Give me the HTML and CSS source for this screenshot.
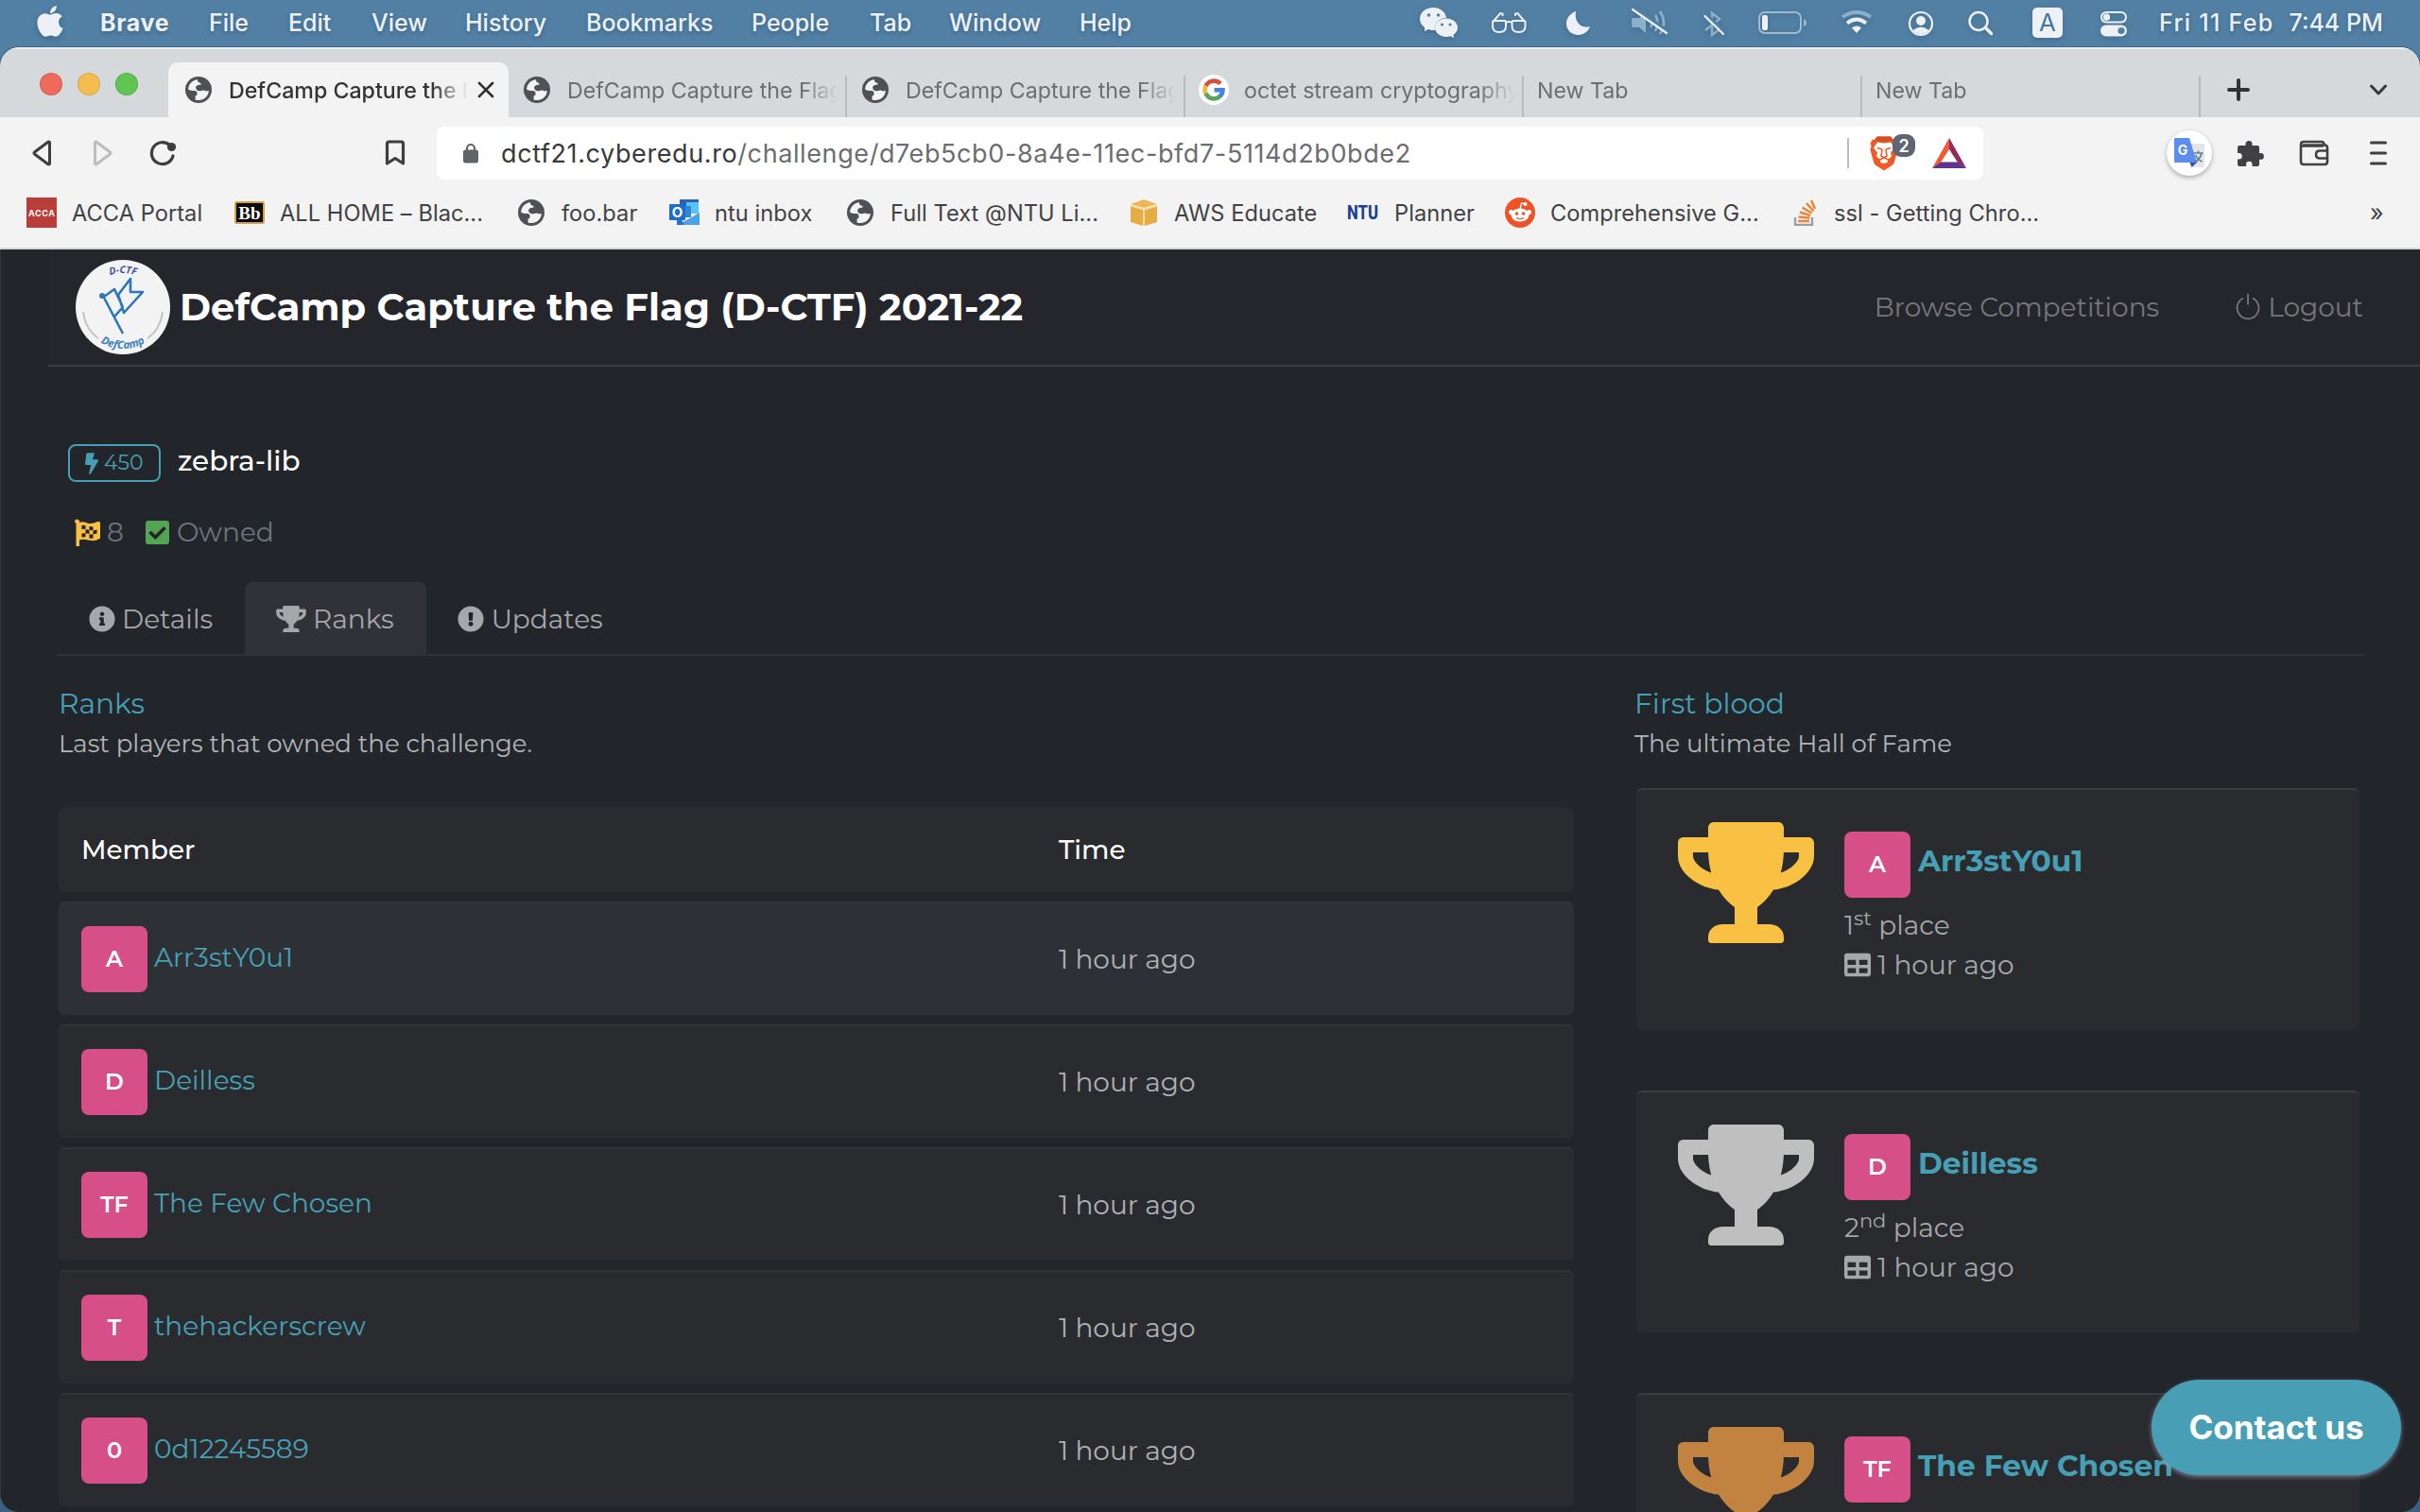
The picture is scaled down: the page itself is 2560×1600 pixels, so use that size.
FILE: index.html
```html
<!DOCTYPE html>
<html lang="en">
<head>
<meta charset="utf-8">
<title>DefCamp Capture the Flag (D-CTF) 2021-22</title>
<link rel="stylesheet" href="styles.css">
</head>
<body>
<svg class="defs" width="0" height="0" aria-hidden="true">
  <symbol id="globe" viewBox="0 0 28 28">
    <circle cx="14" cy="14" r="14" fill="#505157"/>
    <path fill="#f3f3f3" class="land" d="M13 3.2C7.500 3.600 3.300 8.200 3.100 13.600c1.800 1.200 4.300 1.600 6.700 1.500 1.700 0 2.700.9 2.700 2.500v1.500c0 .8-.8 1.300-1.900 1.400v4.100c4.600 1.400 9.300-.1 12-3.600 1.300-1.700 2.100-3.800 2.200-6-.9.300-1.700.3-2.600.3-1.300 0-1.800-.8-3.100-.8-1.200 0-2.500.9-4.100.8-2.300-.1-3.900-1.900-3.900-3.600 0-1.500 1.300-2.600 2.800-2.800 1-.1 2.100.1 2.600-.6.4-.6-.2-1.500-1.300-1.800-1.200-.3-2.400-1.600-2.200-3.300z"/>
    <path fill="#505157" d="M14.500 2.500c-.2 2.400 1 3.500 2.600 4.300 0 2.400 1.200 4.300 3.900 4.300 1.300 0 2.600-.3 3.700-.8C23.500 6 19.600 2.700 14.500 2.500z"/>
  </symbol>
  <symbol id="trophy" viewBox="0 0 576 512">
    <path fill="currentColor" d="M552 64H448V24c0-13.3-10.7-24-24-24H152c-13.300 0-24 10.700-24 24v40H24C10.700 64 0 74.700 0 88v56c0 35.700 22.500 72.400 61.900 100.700 31.500 22.700 69.800 37.100 110 41.700C203.300 338.500 240 360 240 360v72h-48c-35.300 0-64 20.700-64 56v12c0 6.600 5.400 12 12 12h296c6.600 0 12-5.400 12-12v-12c0-35.300-28.700-56-64-56h-48v-72s36.700-21.500 68.100-73.600c40.300-4.600 78.600-19 110-41.700 39.300-28.300 61.900-65 61.900-100.700V88c0-13.300-10.700-24-24-24zM99.300 192.800C74.900 175.200 64 155.600 64 144v-16h64.200c1 32.600 5.800 61.200 12.800 86.200-15.100-5.200-29.200-12.400-41.700-21.400zM512 144c0 16.100-17.700 36.100-35.300 48.800-12.500 9-26.700 16.200-41.800 21.400 7-25 11.800-53.600 12.800-86.200H512v16z"/>
  </symbol>
  <symbol id="table" viewBox="0 0 512 512">
    <path fill="currentColor" d="M464 32H48C21.490 32 0 53.490 0 80v352c0 26.510 21.490 48 48 48h416c26.510 0 48-21.490 48-48V80c0-26.510-21.490-48-48-48zM224 416H64v-96h160v96zm0-160H64v-96h160v96zm224 160H288v-96h160v96zm0-160H288v-96h160v96z"/>
  </symbol>
</svg>

<div class="menubar">
  <svg class="apple" viewBox="0 0 384 512"><path d="M318.700 268.700c-.2-36.700 16.400-64.400 50-84.800-18.800-26.900-47.200-41.700-84.700-44.600-35.500-2.800-74.300 20.700-88.500 20.700-15 0-49.400-19.700-76.400-19.700C63.300 141.200 4 184.800 4 273.500q0 39.300 14.400 81.200c12.800 36.700 59 126.700 107.200 125.200 25.200-.6 43-17.900 75.800-17.900 31.800 0 48.300 17.900 76.400 17.900 48.600-.7 90.400-82.500 102.600-119.300-65.200-30.700-61.700-90-61.700-91.900zm-56.600-164.200c27.300-32.400 24.800-61.900 24-72.500-24.100 1.400-52 16.400-67.900 34.900-17.500 19.800-27.800 44.300-25.600 71.900 26.100 2 49.900-11.400 69.500-34.300z"/></svg>
  <nav class="menus">
    <b>Brave</b><span>File</span><span>Edit</span><span>View</span><span>History</span><span>Bookmarks</span><span>People</span><span>Tab</span><span>Window</span><span>Help</span>
  </nav>
  <div class="tray">
    <svg width="45" height="48"><g fill="#edf1f5"><path d="M16 8C8 8 2 13 2 20c0 4 2 7 5 9v4l4-2c2 1 5 1 7 1C17 24 23 19 30 19 29 12 23 8 16 8z"/><path d="M30 19.500c-6.500 0-12 4.300-12 9.800S23.500 39 30 39c1.500 0 3-.2 4.500-.7l3.500 2-.5-3.600c2.700-1.700 4.500-4.300 4.500-7.400 0-5.500-5.500-9.800-12-9.800z"/></g><g fill="#5180a4"><circle cx="11.500" cy="16" r="1.800"/><circle cx="21.500" cy="16" r="1.800"/><circle cx="25.500" cy="26" r="1.600"/><circle cx="34" cy="26" r="1.600"/></g></svg>
    <svg width="46" height="48" fill="none" stroke="#edf1f5" stroke-width="2"><path d="M9 23.500q0-1.500 1.500-1.500h11q1.500 0 1.500 1.500v4q0 6.500-7 6.500t-7-6.500zM29.500 23.500q0-1.500 1.500-1.500h11q1.500 0 1.500 1.500v4q0 6.500-7 6.500t-7-6.500zM23 23.500q3.200-1 6.500 0M9 23.500l8-9.500 2.500.5v2.500M43.500 23.500l-8-9.500-2.500.5v2.500"/></svg>
    <svg width="45" height="48"><path fill="#edf1f5" d="M17 12C10 14.500 7 20 7 25c0 7 5.500 12 12.500 12 6 0 10.500-3.500 12.500-9-9 2.500-17-4-15-16z"/></svg>
    <svg width="50" height="48" fill="none"><path fill="#8db0c9" d="M8 19h6l7-6v22l-7-6H8q-2 0-2-2v-6q0-2 2-2z"/><path stroke="#8db0c9" stroke-width="2.500" d="M26 20q3 4 0 9M31 16q5 8 0 17M36 12q8 12 0 24"/><path stroke="#5180a4" stroke-width="5" d="M8 8l35 25"/><path stroke="#edf1f5" stroke-width="2.200" stroke-linecap="round" d="M7 10l36 25"/></svg>
    <svg width="40" height="48" fill="none"><path stroke="#8db0c9" stroke-width="2.500" d="M9 32l15-12-8-6v23l8-6L10 19"/><path stroke="#5180a4" stroke-width="5" d="M9 15l20 20"/><path stroke="#edf1f5" stroke-width="2.200" stroke-linecap="round" d="M8.500 17l19.500 19"/></svg>
    <svg width="60" height="48" fill="none"><rect x="11" y="13" width="44" height="22" rx="6" stroke="#9dbad0" stroke-width="2"/><rect x="14" y="16" width="6" height="16" rx="2" fill="#edf1f5"/><path fill="#9dbad0" d="M58 20q3 1 3 4t-3 4z"/></svg>
    <svg width="40" height="48" fill="none"><path stroke="#8db0c9" stroke-width="3.800" d="M4 18q15-10 30 0"/><path stroke="#edf1f5" stroke-width="3.800" d="M9 24.500q10-8 20 0"/><path fill="#edf1f5" d="M19 35l-5-5.500q5-4 10 0z"/></svg>
    <svg width="40" height="48"><circle cx="17" cy="25" r="12" fill="none" stroke="#edf1f5" stroke-width="2.200"/><circle cx="17" cy="22" r="5" fill="#edf1f5"/><path fill="#edf1f5" d="M8.500 32q8.500-7 17 0-3 4-8.500 4t-8.500-4z"/></svg>
    <svg width="45" height="48" fill="none" stroke="#edf1f5"><circle cx="18" cy="22.500" r="9.500" stroke-width="2.500"/><path stroke-width="3.400" stroke-linecap="round" d="M25.500 29.500l6 6"/></svg>
    <span class="input-source">A</span>
    <svg width="40" height="48"><rect x="8" y="13" width="26" height="10.500" rx="5.200" fill="none" stroke="#edf1f5" stroke-width="2"/><circle cx="13.500" cy="18.200" r="3.600" fill="#edf1f5"/><rect x="7" y="26.500" width="28" height="12" rx="6" fill="#edf1f5"/><circle cx="29" cy="32.500" r="3.600" fill="#5180a4"/></svg>
  </div>
  <div class="clock"><span class="date">Fri 11 Feb</span><span>7:44 PM</span></div>
</div>

<div class="window">
  <div class="tabstrip">
    <div class="lights"><i class="close"></i><i class="min"></i><i class="max"></i></div>
    <div class="tab active"><svg class="fav"><use href="#globe"/></svg><span class="label">DefCamp Capture the Flag</span><svg class="x" width="18" height="18"><path d="M2 2l14 14M16 2L2 16" stroke="#2f2f31" stroke-width="2.600" stroke-linecap="round"/></svg></div>
    <div class="tab"><svg class="fav"><use href="#globe"/></svg><span class="label">DefCamp Capture the Flag</span></div>
    <div class="tab"><svg class="fav"><use href="#globe"/></svg><span class="label">DefCamp Capture the Flag</span></div>
    <div class="tab google"><svg width="32" height="32"><circle cx="16" cy="16" r="16" fill="#fff"/><g fill="none" stroke-width="4.600"><path stroke="#d94f3d" d="M7.600 12A9.500 9.500 0 0 1 23 9.500"/><path stroke="#efb73e" d="M7.700 20.500a9.500 9.500 0 0 1 0-9"/><path stroke="#56a55a" d="M22.500 23A9.500 9.500 0 0 1 7.600 20"/><path stroke="#4a80ee" d="M16.500 16.200h9a9.500 9.500 0 0 1-3.200 6.900"/></g></svg><span class="label">octet stream cryptography</span></div>
    <div class="tab blank"><span class="label">New Tab</span></div>
    <div class="tab blank"><span class="label">New Tab</span></div>
    <div class="strip-end">
      <svg width="24" height="24"><path d="M12 2v20M2 12h20" stroke="#333335" stroke-width="4" stroke-linecap="round"/></svg>
      <svg width="20" height="14" fill="none"><path d="M2.500 3l7.500 8 7.500-8" stroke="#3a3a3c" stroke-width="3" stroke-linecap="round" stroke-linejoin="round"/></svg>
    </div>
  </div>

  <div class="toolbar">
    <div class="nav">
      <svg width="22" height="30" fill="none" stroke="#3e3e40" stroke-width="3" stroke-linejoin="round"><path d="M18.500 3.500v23q-1 1-2 0L2.500 16q-1-1 0-2L16.500 3.500q1-1 2 0z"/></svg>
      <svg width="22" height="30" fill="none" stroke="#bdbdbd" stroke-width="3" stroke-linejoin="round"><path d="M3.500 3.500v23q1 1 2 0L19.500 16q1-1 0-2L5.500 3.500q-1-1-2 0z"/></svg>
      <svg width="30" height="30" fill="none"><path d="M21.500 6.500A11.500 11.500 0 1 0 25 18" stroke="#3e3e40" stroke-width="3.200" stroke-linecap="round"/><circle cx="23.500" cy="8.500" r="4.600" fill="#3e3e40"/></svg>
      <svg width="22" height="30" fill="none" stroke="#3e3e40" stroke-width="3.200" stroke-linejoin="round"><path d="M2.500 26V5q0-2 2-2h13q2 0 2 2v21L11 20.500z"/></svg>
    </div>
    <div class="urlbar">
      <svg width="18" height="24"><path d="M5 10V7a4 4 0 0 1 8 0v3" fill="none" stroke="#606368" stroke-width="2.200"/><rect x="1" y="8.500" width="16" height="14" rx="2.500" fill="#606368"/></svg>
      <span class="url">dctf21.cyberedu.ro<span>/challenge/d7eb5cb0-8a4e-11ec-bfd7-5114d2b0bde2</span></span>
      <i class="sep"></i>
      <svg class="brave" width="50" height="40"><path fill="#ef5b25" d="M8 2.500h14l3 3.500 3-.5 1.500 4-1 3 1 4-3.500 13q-.5 2-2.500 3.500L15 38.500 6.500 33Q4.500 31.500 4 29.500L.5 16.500l1-4-1-3L3 5.500l2 .5z"/><path fill="#d14f22" d="M8 2.500h14l3 3.500-3 1.500H8L5 6z"/><path fill="#fff" d="M8 8.500l7 1 7-1 4 6-4 5 1 4-3.500 3 -1 3.500L15 31l-3.500-1-1-3.500L7 23.500l1-4-4-5z"/><path fill="none" stroke="#ef5b25" stroke-width="1.600" d="M8 14.500l5 1.500M22 14.500L17 16M13 16l-1 7 3 2 3-2-1-7M10 27l5-2 5 2"/><rect x="24" y="0" width="24" height="24" rx="9" fill="#606473"/><text x="36" y="18.500" text-anchor="middle" class="count">2</text></svg>
      <svg width="36" height="32"><path fill="#ee5a3a" d="M18 0L0 32l9-6 9-14z"/><path fill="#922a5e" d="M18 0l18 32-9-6-9-14z"/><path fill="#5f348c" d="M0 32h36l-9-6.500H9z"/></svg>
    </div>
    <div class="ext">
      <span class="translate"><svg width="34" height="34"><path fill="#e3e5e8" d="M14 7h18q1 0 1 1v24H20z"/><path fill="#3450b0" d="M17 26h9l-6.500 6z"/><path fill="#5b8def" d="M2 1h15l8 26H2q-1 0-1-1V2q0-1 1-1z"/><text x="10" y="19" text-anchor="middle" class="g">G</text><path fill="none" stroke="#62808f" stroke-width="1.700" d="M21.500 17h10M26.500 14.500V17M30 17q-1.500 6-7 9.500M23.500 19q2 5 7 7"/></svg></span>
      <svg width="30" height="30"><path fill="#414143" d="M3 7h6.500V5.500a3.500 3.500 0 0 1 7 0V7H22q2 0 2 2v6h1.500a3.300 3.300 0 0 1 0 6.800H24V27q0 2-2 2h-5.500v-2a3.200 3.200 0 0 0-6.400 0v2H3q-2 0-2-2v-5.500h1.500a3.200 3.200 0 0 0 0-6.500H1V9q0-2 2-2z"/></svg>
      <svg width="34" height="28" fill="none" stroke="#414143" stroke-width="2.600" stroke-linejoin="round"><path d="M4 5.500h23q3 0 3 3V23q0 3-3 3H5q-3 0-3-3V5q0-3 3-3h19q2 0 3 3.500M31 11.500h-9q-4 0-4 4t4 4h9M2 6.500h24"/></svg>
      <svg width="18" height="26" stroke="#3e3e40" stroke-width="3" stroke-linecap="round"><path d="M1.500 2h15M1.500 13h15M1.500 24h15"/></svg>
    </div>
  </div>

  <div class="bookmarks">
    <a><svg width="32" height="32"><rect width="32" height="32" fill="#b93d3b"/><text x="16" y="20" text-anchor="middle" class="acca" textLength="28">ACCA</text></svg>ACCA Portal</a>
    <a><svg width="32" height="32"><rect x="1" y="5" width="30" height="22" rx="1.500" fill="#0b0b0b" stroke="#cfa24a" stroke-width="2"/><text x="16" y="22.500" text-anchor="middle" class="bb">Bb</text></svg>ALL HOME – Blac...</a>
    <a><svg width="32" height="28"><use href="#globe" x="2" width="28" height="28"/></svg>foo.bar</a>
    <a><svg width="32" height="30"><path fill="#2a62b4" d="M11 1h20v14H11z"/><path fill="#5cc2f5" d="M18 4h13v12H18z"/><path fill="#2f87d8" d="M11 8h12v12H11z"/><path fill="#4aa3e4" d="M8 28h24V15L20 22z"/><path fill="#2c6fc4" d="M8 14v14h8z"/><rect y="6" width="17" height="17" rx="1" fill="#1f6ccb"/><text x="8.500" y="20" text-anchor="middle" class="o">O</text></svg>ntu inbox</a>
    <a><svg width="32" height="28"><use href="#globe" x="2" width="28" height="28"/></svg>Full Text @NTU Li...</a>
    <a><svg width="32" height="28"><path fill="#e5ae45" d="M2 6.500L15 10v18L2 24zM30 6.500L17 10v18l13-4z"/><path fill="#ecb856" d="M2 5L16 0l14 5-14 4z"/><path stroke="#f5dda8" stroke-width="2" d="M2 6.500l14 4 14-4M16 10v18" fill="none"/></svg>AWS Educate</a>
    <a><svg width="34" height="22"><text x="0" y="18" class="ntu" textLength="33" lengthAdjust="spacingAndGlyphs">NTU</text></svg>Planner</a>
    <a><svg width="32" height="32"><circle cx="16" cy="16" r="16" fill="#ee5328"/><g fill="#fff"><ellipse cx="16" cy="18.500" rx="9.500" ry="7"/><circle cx="6.500" cy="15.500" r="2.500"/><circle cx="25.500" cy="15.500" r="2.500"/><circle cx="21.500" cy="7" r="2"/></g><path d="M16 12l1.500-6 4 1" fill="none" stroke="#fff" stroke-width="1.400"/><g fill="#ee5328"><circle cx="12.500" cy="17" r="1.800"/><circle cx="19.500" cy="17" r="1.800"/></g><path d="M12 21.500q4 2.500 8 0" stroke="#ee5328" stroke-width="1.200" fill="none"/></svg>Comprehensive G...</a>
    <a><svg width="32" height="28"><path fill="none" stroke="#9b9ea3" stroke-width="2.400" d="M7 19v8h18v-8"/><path stroke="#e8863c" stroke-width="2.600" fill="none" d="M10 23h12M10.500 18.500l12 1.200M12 13.500l11 3.400M14.500 8.500l10 6M19 4l7.500 8.500M24 1l4 9"/></svg>ssl - Getting Chro...</a>
    <span class="more">»</span>
  </div>

  <main class="page">
    <header class="site">
      <svg class="logo" viewBox="0 0 100 100"><defs><path id="arc-top" d="M10 50a40 36 0 0 1 80 0"/><path id="arc-bottom" d="M4 48a46 46 0 0 0 92 0"/></defs><circle cx="50" cy="50" r="50" fill="#f3f3f3"/><g fill="none" stroke="#2d76ba" stroke-width="2.600" stroke-linejoin="round"><path d="M29 38l21 40M30 39l11-8 9 19M41 60l9-10M45 37l13-17v14h13L51 56l-2-7z"/></g><circle cx="28" cy="38" r="3" fill="#2d76ba"/><path d="M8 55q2 18 16 28M92 55q-2 18-16 28" fill="none" stroke="#c4c4c4" stroke-width="2"/><text class="logo-top"><textPath href="#arc-top" startOffset="50%" text-anchor="middle">D-CTF</textPath></text><text class="logo-bottom"><textPath href="#arc-bottom" startOffset="50%" text-anchor="middle">DefCamp</textPath></text></svg>
      <h1>DefCamp Capture the Flag (D-CTF) 2021-22</h1>
      <a>Browse Competitions</a>
      <a class="logout"><svg width="26" height="28" fill="none" stroke="#75777b" stroke-width="1.800"><path d="M8 4.500a11.500 11.500 0 1 0 10 0M13 0v11.500"/></svg>Logout</a>
    </header>

    <section class="title">
      <span class="points"><svg width="14" height="23" viewBox="0 0 320 512"><path fill="currentColor" d="M296 160H180.600l42.600-129.800C227.200 15 215.700 0 200 0H56C44 0 33.800 8.900 32.200 20.800l-32 240C-1.700 275.200 9.500 288 24 288h118.700L96.600 482.500c-3.600 15.200 8 29.500 23.300 29.500 8.400 0 16.400-4.400 20.800-12l176-304c9.300-15.900-2.200-36-20.700-36z"/></svg>450</span>
      <h2>zebra-lib</h2>
    </section>
    <section class="stats">
      <svg width="27" height="29"><path fill="#f8c143" fill-rule="evenodd" d="M0 2.500a2.500 2.500 0 0 1 5 1.500c4-2 7.500 1 11 1 3.500.1 6-1.500 9-2.300q2 0 2 1.800v16c-3 2-6 3-9.500 2.500-4.500-.5-8-2.500-12.500-.5V29H1.500V4.800Q0 4.500 0 2.500zM7.500 7v4l4-.2v-4zm8 1v4l4 .3V8.500zM11.500 11v4.200l4 .8V12zm8 1.400v4l4-1v-4zM7.500 15.500v4l4-.2v-4zm8 1v4l4 .3v-4.200z"/></svg><span class="solves">8</span>
      <svg width="25" height="25" viewBox="0 32 448 448"><path fill="#52a552" d="M400 480H48c-26.510 0-48-21.490-48-48V80c0-26.510 21.490-48 48-48h352c26.510 0 48 21.490 48 48v352c0 26.510-21.490 48-48 48zm-204.686-98.059l184-184c6.248-6.248 6.248-16.379 0-22.627l-22.627-22.627c-6.248-6.248-16.379-6.249-22.628 0L184 302.745l-70.059-70.059c-6.248-6.248-16.379-6.248-22.628 0l-22.627 22.627c-6.248 6.248-6.248 16.379 0 22.627l104 104c6.249 6.250 16.379 6.250 22.628.001z"/></svg><span class="owned">Owned</span>
    </section>

    <nav class="subtabs">
      <a><svg width="28" height="28" viewBox="0 0 512 512"><path fill="currentColor" d="M256 8C119.043 8 8 119.083 8 256c0 136.997 111.043 248 248 248s248-111.003 248-248C504 119.083 392.957 8 256 8zm0 110c23.196 0 42 18.804 42 42s-18.804 42-42 42-42-18.804-42-42 18.804-42 42-42zm56 254c0 6.627-5.373 12-12 12h-88c-6.627 0-12-5.373-12-12v-24c0-6.627 5.373-12 12-12h12v-64h-12c-6.627 0-12-5.373-12-12v-24c0-6.627 5.373-12 12-12h64c6.627 0 12 5.373 12 12v100h12c6.627 0 12 5.373 12 12v24z"/></svg>Details</a>
      <a class="on"><svg width="32" height="28"><use href="#trophy"/></svg>Ranks</a>
      <a><svg width="28" height="28" viewBox="0 0 512 512"><path fill="currentColor" d="M504 256c0 136.997-111.043 248-248 248S8 392.997 8 256C8 119.083 119.043 8 256 8s248 111.083 248 248zm-248 50c-25.405 0-46 20.595-46 46s20.595 46 46 46 46-20.595 46-46-20.595-46-46-46zm-43.673-165.346l7.418 136c.347 6.364 5.609 11.346 11.982 11.346h48.546c6.373 0 11.635-4.982 11.982-11.346l7.418-136c.375-6.874-5.098-12.654-11.982-12.654h-63.383c-6.884 0-12.356 5.780-11.981 12.654z"/></svg>Updates</a>
    </nav>

    <div class="columns">
      <section class="ranks">
        <h3>Ranks</h3>
        <p>Last players that owned the challenge.</p>
        <div class="row head"><span>Member</span><span>Time</span></div>
        <div class="row hover"><span class="member"><i>A</i><a>Arr3stY0u1</a></span><span>1 hour ago</span></div>
        <div class="row"><span class="member"><i>D</i><a>Deilless</a></span><span>1 hour ago</span></div>
        <div class="row"><span class="member"><i>TF</i><a>The Few Chosen</a></span><span>1 hour ago</span></div>
        <div class="row"><span class="member"><i>T</i><a>thehackerscrew</a></span><span>1 hour ago</span></div>
        <div class="row"><span class="member"><i>0</i><a>0d12245589</a></span><span>1 hour ago</span></div>
      </section>
      <section class="blood">
        <h3>First blood</h3>
        <p>The ultimate Hall of Fame</p>
        <article class="card gold"><svg class="cup"><use href="#trophy"/></svg><div><div class="who"><i>A</i><b>Arr3stY0u1</b></div><div class="place">1<sup>st</sup> place</div><div class="when"><svg width="28" height="28"><use href="#table"/></svg>1 hour ago</div></div></article>
        <article class="card silver"><svg class="cup"><use href="#trophy"/></svg><div><div class="who"><i>D</i><b>Deilless</b></div><div class="place">2<sup>nd</sup> place</div><div class="when"><svg width="28" height="28"><use href="#table"/></svg>1 hour ago</div></div></article>
        <article class="card bronze"><svg class="cup"><use href="#trophy"/></svg><div><div class="who"><i>TF</i><b>The Few Chosen</b></div></div></article>
      </section>
    </div>
    <button class="contact">Contact us</button>
  </main>
</div>
</body>
</html>
```
FILE: styles.css
```css
* { box-sizing: border-box; margin: 0; padding: 0; }
body {
  width: 2560px; height: 1600px; overflow: hidden;
  background: linear-gradient(#5180a4 0 60px, #3c5f82 1500px);
  font-family: Inter, "Liberation Sans", sans-serif;
}
svg { display: block; flex: none; }
i { font-style: normal; }
.defs { position: absolute; }

/* macOS menu bar */
.menubar { display: flex; align-items: center; height: 50px; color: #edf1f5; font-size: 25px; font-weight: 500; text-shadow: 0 2px 4px rgba(20, 50, 80, .35); white-space: nowrap; }
.apple { width: 28px; height: 37px; margin: -6px 39px 0 39px; fill: #edf1f5; filter: drop-shadow(0 2px 3px rgba(20, 50, 80, .35)); }
.menus { display: grid; grid-template-columns: 115px 84px 88px 99px 128px 175px 125px 84px 138px 58px; width: 1394px; line-height: 46px; margin-bottom: 3px; }
.menus b { font-weight: 700; letter-spacing: .7px; }
.tray { display: grid; grid-template-columns: 70px 80px 70px 75px 60px 90px 70px 60px 70px 70px 69px; align-items: center; height: 50px; filter: drop-shadow(0 2px 3px rgba(20, 50, 80, .25)); }
.tray svg { margin-top: -2px; overflow: visible; }
.tray svg:nth-child(6) { margin-left: -5px; }
.input-source { width: 32px; height: 32px; margin: -2px 0 0 5px; border-radius: 5px; background: #edf1f5; color: #4577a0; font: 400 26px/32px Inter, sans-serif; text-align: center; text-shadow: none; }
.clock { display: flex; gap: 16px; line-height: 46px; margin-bottom: 3px; }
.date { letter-spacing: 1.3px; }

/* Browser chrome */
.window { height: 1550px; border-radius: 20px; overflow: hidden; background: #22252a; box-shadow: 0 0 0 1px #3f6484; }
.tabstrip { display: flex; align-items: flex-end; height: 74px; background: #d5d9dc; border-top: 2px solid #eceeef; }
.lights { display: flex; gap: 16px; width: 178px; padding-left: 42px; margin-bottom: 23px; }
.lights i { width: 24px; height: 24px; border-radius: 50%; border: 1px solid rgba(0, 0, 0, .12); }
.close { background: #ee6a5f; }
.min { background: #f5bd4f; }
.max { background: #61c554; }
.tab { display: flex; align-items: center; width: 358px; height: 44px; padding: 0 8px 14px 16px; border-right: 2px solid #b9bbbc; color: #6c6e70; font-size: 23.2px; white-space: nowrap; }
.tab.active { width: 360px; height: 58px; padding: 0 15px 0 18px; border: 0; border-radius: 10px 10px 0 0; background: #f3f3f3; color: #333335; font-weight: 500; }
.fav { width: 28px; height: 28px; margin-right: 18px; }
.label { flex: 1; padding-top: 2px; overflow: hidden; -webkit-mask-image: linear-gradient(90deg, #000 calc(100% - 38px), transparent 100%); mask-image: linear-gradient(90deg, #000 calc(100% - 38px), transparent 100%); }
.active .label { margin-right: 10px; }
.tab.google { padding-left: 14px; }
.google svg { margin-right: 16px; }
.tab.blank { padding-left: 14px; }
.strip-end { display: flex; align-items: center; justify-content: space-between; flex: 1; height: 44px; padding: 0 34px 14px 28px; }

.toolbar { display: flex; align-items: center; height: 76px; background: #f3f3f3; }
.nav { display: grid; grid-template-columns: 63px 61px 249px 55px; width: 462px; padding-left: 34px; }
.urlbar { display: flex; align-items: center; width: 1636px; height: 56px; padding: 0 18px 0 27px; border-radius: 8px; background: #fff; }
.url { margin-left: 23px; flex: 1; color: #38393b; font-size: 27px; letter-spacing: .6px; white-space: nowrap; }
.url span { color: #6b6d70; }
.sep { width: 2px; height: 32px; background: #b9bbbd; }
.brave { margin: 0 16px 0 22px; }
.count { font: 600 18px Inter, sans-serif; fill: #fff; }
.ext { display: flex; align-items: center; margin-left: 194px; }
.ext > svg + svg { margin-left: 36px; }
.ext > svg:last-child { margin-left: 41px; }
.translate { display: grid; place-items: center; width: 48px; height: 48px; margin-right: 26px; border-radius: 50%; background: #fff; box-shadow: 0 2px 5px rgba(0, 0, 0, .3); }
.g { font: 700 14px Inter, sans-serif; fill: #fff; }

.bookmarks { display: grid; grid-template-columns: 220px 298px 162px 186px 300px 231px 167px 300px 615px 40px; align-items: center; height: 64px; padding: 0 0 12px 28px; background: #f3f3f3; border-bottom: 2px solid #d2d6d9; color: #414244; font-size: 23.600px; letter-spacing: .06px; white-space: nowrap; }
.bookmarks a { display: flex; align-items: center; gap: 16px; }
.more { font-size: 25px; }
.acca { font: 700 9px Inter, sans-serif; fill: #fff; }
.bb { font: 700 19px "Liberation Serif", serif; fill: #fff; }
.o { font: 700 15px Inter, sans-serif; fill: #fff; }
.ntu { font: 800 20px Roboto, sans-serif; fill: #1d3f8f; }

/* Site */
.page { font-family: Montserrat, Inter, sans-serif; font-size: 28px; color: #a6a7aa; line-height: 42px; border-left: 1px solid #34383d; }
.site { display: flex; align-items: center; height: 124px; margin-left: 49px; padding: 0 60px 0 30px; background: #25262b; border-bottom: 2px solid #3a3b40; color: #75777b; }
.logo { width: 100px; height: 100px; margin-right: 10px; }
.logo-top { font: italic 700 10.500px "Open Sans", sans-serif; fill: #4a51a4; }
.logo-bottom { font: italic 700 11.500px "Open Sans", sans-serif; fill: #3a7fc0; }
.site h1 { flex: 1; font-size: 40px; font-weight: 700; letter-spacing: .05px; color: #fff; }
.logout { display: flex; align-items: center; gap: 8px; margin-left: 81px; }
.title { display: flex; align-items: flex-start; gap: 18px; padding: 82px 0 0 71px; }
.points { display: flex; align-items: center; gap: 6px; width: 98px; height: 40px; padding-left: 16px; border: 2px solid #46a0b5; border-radius: 8px; color: #46a0b5; font-size: 22px; }
.title h2 { margin-top: -1px; font-size: 29.500px; font-weight: 500; line-height: 36px; color: #fff; }
.stats { display: flex; align-items: center; height: 42px; margin-top: 32px; padding-left: 78px; color: #6e757d; }
.solves { margin: 0 23px 0 7px; }
.owned { margin-left: 8px; }
.subtabs { display: flex; height: 78px; margin: 32px 60px 0 59px; border-bottom: 2px solid #303338; }
.subtabs a { display: flex; align-items: center; gap: 7px; height: 76px; padding: 2px 34px 0 34px; border-radius: 8px 8px 0 0; }
.subtabs .on { padding-left: 33px; background: #303237; }
.subtabs a:last-child { padding-left: 33px; gap: 8px; }
.columns { display: flex; gap: 65px; padding-left: 61px; }
.ranks { width: 1603px; }
.blood { width: 767px; }
h3 { margin-top: 29px; font-size: 29.800px; font-weight: 400; line-height: 42px; color: #46a0b5; }
.columns p { font-size: 26px; line-height: 40px; margin-top: 2px; color: #b1b5b9; }
.ranks p { margin-bottom: 47px; }
.blood p { margin-bottom: 27px; }
.blood h3, .blood p { margin-left: -1px; }
.row { display: grid; grid-template-columns: 1034px 1fr; align-items: center; height: 120px; margin-bottom: 10px; padding-left: 24px; border-top: 2px solid #323438; border-radius: 6px; background: #2a2b2f; color: #aeb1b5; }
.head { height: 90px; border: 0; color: #fff; font-weight: 500; font-size: 27.800px; }
.hover { background: #2d3136; border-color: #303439; }
.member { display: flex; align-items: center; gap: 7px; color: #46a0b5; }
.member a { margin-top: -4px; }
.row i, .who i { display: grid; place-items: center; width: 70px; height: 70px; border-radius: 8px; background: #d64f88; color: #fff; font-size: 24px; font-weight: 600; }
.card { display: flex; height: 256px; margin-bottom: 64px; padding-left: 43px; border-top: 2px solid #3a3c40; border-radius: 6px; background: #2a2b2f; }
.blood .card { width: 765px; margin-left: 1px; }
.cup { width: 144px; height: 128px; margin: 34px 32px 0 1px; }
.card > div { padding-top: 44px; }
.gold .cup { color: #f8c143; }
.silver .cup { color: #bfbfbf; }
.bronze .cup { color: #c28240; }
.who { display: flex; align-items: flex-start; gap: 8px; height: 70px; }
.who b { margin-top: 10px; font-size: 31.300px; font-weight: 700; color: #46a0b5; white-space: nowrap; }
.place { margin-top: 8px; }
.place sup { font-size: 21px; line-height: 0; vertical-align: baseline; position: relative; top: -10px; }
.when { display: flex; align-items: center; gap: 7px; }
.contact { position: absolute; left: 2276px; top: 1460px; width: 264px; height: 101px; padding-bottom: 2px; border: 0; border-radius: 51px; background: #489fb5; color: #fff; font: 700 35px Inter, sans-serif; letter-spacing: -.05px; box-shadow: 0 2px 5px rgba(150, 160, 190, .7); }
```
